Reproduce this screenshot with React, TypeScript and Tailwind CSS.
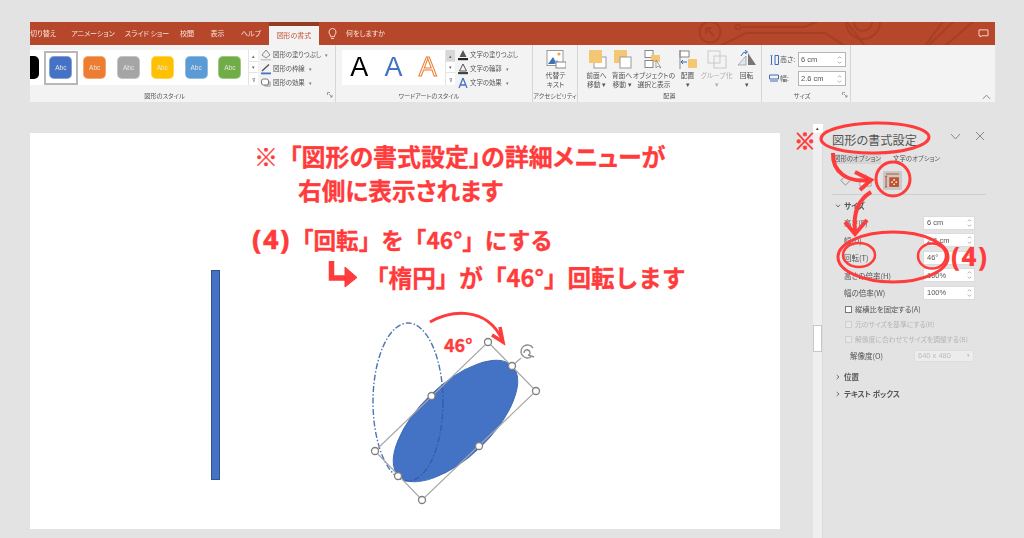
import React from "react";

const RED = "#ff3b3b";
const jp = "font-['Noto_Sans_CJK_JP',sans-serif]";

function Spinner() {
  return (
    <svg viewBox="0 0 6 11" className="w-[5px] h-[10px] shrink-0"><path d="M1 3.5 L3 1.5 L5 3.5 M1 7.5 L3 9.5 L5 7.5" fill="none" stroke="#8a8a8a" strokeWidth="0.8" /></svg>
  );
}

function Swatch({ c, selected }: { c: string; selected?: boolean }) {
  return (
    <div className={`h-[34px] flex items-center justify-center w-[33.8px] shrink-0 border-2 ${selected ? "border-[#b8b8b8]" : "border-transparent"}`}>
      <div className="h-[23px] w-[23px] shrink-0 rounded-[5px] border border-[#ffffff55] text-[#e6e6e6] text-[6.5px] font-['Liberation_Sans',sans-serif] flex items-center justify-center" style={{ background: c }}>Abc</div>
    </div>
  );
}

function ScrollBtns({ first }: { first?: boolean }) {
  return (
    <div className="w-[10px] h-[35px] flex flex-col border-l border-[#e4e4e4] bg-white text-[#666]">
      {["▴", "▾", "⊽"].map((g, i) => (
        <div key={i} className={`h-[11.67px] flex items-center justify-center text-[5px] leading-none ${first && i === 0 ? "bg-[#d8d8d8]" : ""} ${i < 2 ? "border-b border-[#e4e4e4]" : ""}`}>{g}</div>
      ))}
    </div>
  );
}

function CmdRow({ icon, label, arrow = true }: { icon: React.ReactNode; label: string; arrow?: boolean }) {
  return (
    <div className="h-[14px] flex items-center gap-[1px] text-[6.4px] text-[#555] whitespace-nowrap">
      <span className="w-[12px] h-[12px] shrink-0">{icon}</span>
      <span>{label}</span>
      {arrow && <span className="text-[5px] ml-[3px] text-[#777]">▾</span>}
    </div>
  );
}

const IconFill = () => (
  <svg viewBox="0 0 12 12" className="w-full h-full"><path d="M6 1 L10 6 L6 9 L2 6Z" fill="none" stroke="#8a8a8a" /><rect x="1" y="10" width="10" height="1.5" fill="#c9c9c9" /></svg>
);
const IconLine = () => (
  <svg viewBox="0 0 12 12" className="w-full h-full"><path d="M2 8 L9 1.5" stroke="#555" strokeWidth="1.4" /><rect x="1" y="9.5" width="10" height="1.8" fill="#4472c4" /></svg>
);
const IconEffect = () => (
  <svg viewBox="0 0 12 12" className="w-full h-full"><rect x="4" y="4" width="7" height="6" rx="2" fill="#bdbdbd" /><rect x="1.5" y="2" width="7" height="6" rx="2" fill="#fff" stroke="#777" /></svg>
);
const IconTextFill = () => (
  <svg viewBox="0 0 12 12" className="w-full h-full"><path d="M6 1 L9.5 8 H2.5Z" fill="#555" /><rect x="1" y="9" width="10" height="2.2" fill="#222" /></svg>
);
const IconTextLine = () => (
  <svg viewBox="0 0 12 12" className="w-full h-full"><path d="M6 1 L9.5 8 H2.5Z" fill="none" stroke="#555" /><rect x="1" y="9" width="10" height="2.2" fill="#444" /></svg>
);
const IconTextFx = () => (
  <svg viewBox="0 0 12 12" className="w-full h-full"><path d="M6 1 L10 11 M6 1 L2 11 M3.5 8 H8.5" fill="none" stroke="#4472c4" strokeWidth="1.3" /></svg>
);

function Launcher() {
  return (
    <svg viewBox="0 0 6 6" className="w-[6px] h-[6px]"><path d="M0.5 0.5 H3 M0.5 0.5 V3 M2 2 L5 5 M5 3 V5 H3" fill="none" stroke="#777" strokeWidth="0.7" /></svg>
  );
}

function Group({ w, label, launcher, children, pad = 0, labelPr = 0 }: { w: number; label: string; launcher?: boolean; children: React.ReactNode; pad?: number; labelPr?: number }) {
  return (
    <div className="h-full flex flex-col shrink-0 border-r border-[#d6d6d6]" style={{ width: w }}>
      <div className="flex-1 min-h-0" style={{ paddingLeft: pad }}>{children}</div>
      <div className="h-[13px] flex items-center justify-center relative text-[6.2px] text-[#555] whitespace-nowrap" style={{ paddingRight: labelPr }}>
        {label}
        {launcher && <span className="absolute right-[2px] top-[3px] flex"><Launcher /></span>}
      </div>
    </div>
  );
}

function BigBtn({ w, icon, lines, disabled }: { w: number; icon: React.ReactNode; lines: string[]; disabled?: boolean }) {
  return (
    <div className={`shrink-0 flex flex-col items-center pt-[5px] text-[6.8px] leading-[9px] ${disabled ? "text-[#b0b0b0]" : "text-[#555]"}`} style={{ width: w }}>
      <div className="h-[19px] w-[20px] mb-[2px]">{icon}</div>
      {lines.map((l, i) => (
        <div key={i} className="whitespace-nowrap">{l}</div>
      ))}
    </div>
  );
}

const Y = "#f4c775";

function SizeInput({ v }: { v: string }) {
  return (
    <div className="w-[48px] h-[15px] bg-white border border-[#b5b5b5] flex items-center justify-between pl-[2px] pr-[3px] text-[7.5px] text-[#555] font-['Liberation_Sans',sans-serif]">
      <span>{v}</span>
      <Spinner />
    </div>
  );
}

function Ribbon() {
  return (
    <div className={`ml-[30px] w-[965px] ${jp} blur-[0.35px]`}>
      <div className="h-[23px] bg-[#b7472a] flex items-center text-[7px] text-[#f6e3dc] relative overflow-hidden">
        <div className="w-[34px] text-left whitespace-nowrap">切り替え</div>
        <div className="w-[52px] text-center whitespace-nowrap pl-[6px]">アニメーション</div>
        <div className="w-[56px] text-center whitespace-nowrap pl-[6px]">スライド ショー</div>
        <div className="w-[30px] text-center">校閲</div>
        <div className="w-[31px] text-center">表示</div>
        <div className="w-[36px] text-center">ヘルプ</div>
        <div className="w-[50px] h-full bg-[#f3f3f3] border-t-[4px] border-[#963a22] text-[#c2553a] flex items-center justify-center whitespace-nowrap">図形の書式</div>
        <svg viewBox="0 0 12 14" className="w-[11px] h-[13px] ml-[8px]"><path d="M6 1.5a4 4 0 0 1 2.5 7L8 10.5H4L3.5 8.5A4 4 0 0 1 6 1.5Z M4.5 12.5h3" fill="none" stroke="#f6e3dc" /></svg>
        <div className="ml-[8px] whitespace-nowrap">何をしますか</div>
        <svg viewBox="0 0 965 23" className="absolute inset-0 w-[965px] h-[23px]" fill="none" stroke="#a53f25" strokeWidth="2">
          <circle cx="680" cy="10" r="10.5" />
          <path d="M676 6 L684 14 M676 6 H682 M676 6 V12" />
          <circle cx="708" cy="5" r="2.5" />
          <path d="M711 5 H775 L795 -4 M690 24 L716 11 H795 L815 24" />
          <path d="M815 -2 L835 24 H895 L914 -2 M898 24 L925 -2 M915 24 L945 -2" />
          <circle cx="833" cy="0" r="17" />
          <circle cx="833" cy="0" r="9" />
        </svg>
        <svg viewBox="0 0 12 10" className="absolute right-[6px] top-[7px] w-[11px] h-[9px]"><path d="M1 1 H11 V7.5 H4 L2.5 9 V7.5 H1Z" fill="none" stroke="#f6e3dc" /></svg>
      </div>
      <div className="h-[57px] bg-[#f3f3f3] flex">
        <Group w={306} label="図形のスタイル" launcher labelPr={36}>
          <div className="flex pt-[5px]">
            <div className="w-[218px] h-[35px] bg-white flex items-center overflow-hidden">
              <div className="h-[23px] w-[9px] bg-black rounded-r-[5px] shrink-0" />
              <div className="w-[5px] shrink-0" />
              <Swatch c="#4472c4" selected />
              <Swatch c="#ed7d31" />
              <Swatch c="#a5a5a5" />
              <Swatch c="#ffc000" />
              <Swatch c="#5b9bd5" />
              <Swatch c="#70ad47" />
            </div>
            <ScrollBtns />
            <div className="ml-[2px] -mt-[2px] flex flex-col">
              <CmdRow icon={<IconFill />} label="図形の塗りつぶし" />
              <CmdRow icon={<IconLine />} label="図形の枠線" />
              <CmdRow icon={<IconEffect />} label="図形の効果" />
            </div>
          </div>
        </Group>
        <Group w={197} label="ワードアートのスタイル" labelPr={10}>
          <div className="flex pt-[5px] pl-[6px]">
            <div className="w-[103px] h-[35px] bg-white flex items-center justify-around text-[27px] font-['Liberation_Sans',sans-serif] leading-none">
              <span className="text-black">A</span>
              <span className="text-[#4472c4]">A</span>
              <span className="text-white [-webkit-text-stroke:1px_#ed7d31]">A</span>
            </div>
            <ScrollBtns first />
            <div className="ml-[2px] -mt-[2px] flex flex-col">
              <CmdRow icon={<IconTextFill />} label="文字の塗りつぶし" arrow={false} />
              <CmdRow icon={<IconTextLine />} label="文字の輪郭" />
              <CmdRow icon={<IconTextFx />} label="文字の効果" />
            </div>
          </div>
        </Group>
        <Group w={45} label="アクセシビリティ">
          <BigBtn w={45} lines={["代替テ", "キスト"]} icon={
            <svg viewBox="0 0 20 19" className="w-full h-full"><rect x="1" y="0.5" width="16" height="15" fill="#fff" stroke="#999" /><path d="M2 14 L7 7 L11 14Z" fill="#3d72b8" /><path d="M8 14 L11 10 L15 14Z" fill="#7fa8d8" /><circle cx="13" cy="4" r="1.6" fill="#f0a53c" /><rect x="10" y="12" width="10" height="6" fill="#fff" stroke="#888" /></svg>
          } />
        </Group>
        <Group w={184} label="配置" pad={6}>
          <div className="flex">
            <BigBtn w={25} lines={["前面へ", "移動 ▾"]} icon={
              <svg viewBox="0 0 20 19" className="w-full h-full"><rect x="7" y="7" width="12" height="11" fill="#fff" stroke="#999" /><rect x="2" y="0" width="13" height="13" fill={Y} /></svg>
            } />
            <BigBtn w={26} lines={["背面へ", "移動 ▾"]} icon={
              <svg viewBox="0 0 20 19" className="w-full h-full"><rect x="2" y="0" width="13" height="13" fill={Y} /><rect x="8" y="7" width="11" height="11" fill="#fff" stroke="#999" /></svg>
            } />
            <BigBtn w={38} lines={["オブジェクトの", "選択と表示"]} icon={
              <svg viewBox="0 0 20 19" className="w-full h-full"><rect x="1" y="0.5" width="8" height="7" fill="#fff" stroke="#888" /><rect x="7" y="5" width="9" height="7" fill={Y} /><rect x="1" y="10.5" width="8" height="7" fill="#fff" stroke="#888" /><path d="M12 10 L12 18 L14 16 L17 18Z" fill="#fff" stroke="#777" strokeWidth="0.7" /></svg>
            } />
            <BigBtn w={29} lines={["配置", "▾"]} icon={
              <svg viewBox="0 0 20 19" className="w-full h-full"><rect x="2" y="1" width="9" height="6" fill="#fff" stroke="#888" /><rect x="10" y="9" width="9" height="9" fill={Y} /><path d="M2 0 V19" stroke="#888" /><path d="M9 12 H3 M5 10 L3 12 L5 14" stroke="#2f6bb5" fill="none" /></svg>
            } />
            <BigBtn w={29} disabled lines={["グループ化", "▾"]} icon={
              <svg viewBox="0 0 20 19" className="w-full h-full"><rect x="1" y="1" width="12" height="12" fill="none" stroke="#c9c9c9" /><rect x="7" y="6" width="12" height="12" fill="none" stroke="#c9c9c9" /></svg>
            } />
            <BigBtn w={31} lines={["回転", "▾"]} icon={
              <svg viewBox="0 0 20 19" className="w-full h-full"><path d="M1 15 L9 6 V15Z" fill="#dfe7f2" stroke="#888" strokeWidth="0.6" /><path d="M11 3 L19 15 H11Z" fill="#777" /><path d="M4 6 Q6 1 10 2 M8 0 L10.5 2 L8 4" stroke="#2f6bb5" fill="none" /></svg>
            } />
          </div>
        </Group>
        <Group w={89} label="サイズ" launcher labelPr={8}>
          <div className="pt-[7px] pl-[7px] flex flex-col gap-[4px]">
            {[["高さ:", "6 cm"], ["幅:", "2.6 cm"]].map(([l, v], i) => (
              <div key={l} className="flex items-center h-[15px] text-[7px] text-[#555]">
                <svg viewBox="0 0 10 10" className="w-[10px] h-[10px] shrink-0">
                  {i === 0 ? <path d="M1 0 H4 M1 10 H4 M2.5 1 V9 M6 0.5 H9.5 V9.5 H6Z" fill="none" stroke="#3f6db0" /> : <path d="M0 1 V4 M10 1 V4 M1 7 H9 M0.5 1 H9.5 V5 H0.5Z" fill="none" stroke="#3f6db0" />}
                </svg>
                <span className="w-[19px] pl-[1px] whitespace-nowrap">{l}</span>
                <SizeInput v={v} />
              </div>
            ))}
          </div>
        </Group>
        <div className="flex-1 flex items-end justify-end pr-[4px] pb-[2px]">
          <svg viewBox="0 0 10 6" className="w-[9px] h-[6px]"><path d="M1 5 L5 1 L9 5" fill="none" stroke="#777" /></svg>
        </div>
      </div>
    </div>
  );
}

function Slide() {
  const t = `absolute font-bold whitespace-nowrap text-[#ff3b3b] ${jp} leading-none [-webkit-text-stroke:0.3px_#ff3b3b]`;
  const num = "font-['Noto_Sans',sans-serif] font-extrabold";
  return (
    <div className="relative w-[750px] h-[396px] bg-white">
      <div className={`${t} left-[224px] top-[11px] text-[24px]`}>※<span className="ml-[6px]"> 「図形の書式設定」の詳細メニューが</span></div>
      <div className={`${t} left-[268px] top-[46px] text-[23.7px]`}>右側に表示されます</div>
      <div className={`${t} left-[222px] top-[92px] text-[22.6px] [font-feature-settings:normal]`}>
        <span className={`${num} text-[27px] tracking-[1.5px]`}>(4)</span><span>「回転」を「46°」にする</span>
      </div>
      <div className={`${t} left-[335px] top-[133px] text-[23.6px] [font-feature-settings:normal]`}>「楕円」が「46°」回転します</div>
      <div className={`${t} left-[414px] top-[202px] text-[18px]`}>46°</div>
      <div className="absolute left-[181px] top-[137px] w-[9px] h-[210px] bg-[#4472c4] border border-[#2f528f]" />
      <svg viewBox="0 0 750 396" className="absolute inset-0 w-[750px] h-[396px]" fill="none">
        <path d="M301.500 128 V145 H317" stroke={RED} strokeWidth="5.500" />
        <path d="M315 134 L327 144.500 L315 154Z" fill={RED} stroke={RED} />
        <ellipse cx="425.500" cy="288" rx="79" ry="36" transform="rotate(-44 425.500 288)" fill="#4472c4" stroke="#3f6ab5" />
        <ellipse cx="378" cy="269" rx="35" ry="79" stroke="#2f5aa6" strokeWidth="1.400" strokeDasharray="6 2 1.500 2" opacity="0.85" />
        <path d="M458 209 L506 258 L392 367 L345 318Z" stroke="#a6a6a6" strokeWidth="1.200" />
        <path d="M482 233 L491 225" stroke="#a6a6a6" strokeWidth="1.200" />
        {[[458, 209], [506, 258], [392, 367], [345, 318], [401.5, 263], [482, 233], [449, 313], [368, 343]].map(([x, y], i) => (
          <circle key={i} cx={x} cy={y} r="3.500" fill="#fff" stroke="#7f7f7f" strokeWidth="1.300" />
        ))}
        <path d="M501 224 A6.500 6.500 0 1 1 503 215 M494 220 A3 3 0 1 1 499 222 M498 222 L504 224" stroke="#8c8c8c" strokeWidth="1.400" />
        <path d="M400 189 C420 178 455 172 472 206" stroke={RED} strokeWidth="3" />
        <path d="M462 202 L473 209 L470 194" stroke={RED} strokeWidth="3.500" />
      </svg>
    </div>
  );
}

function PaneRow({ label, v }: { label: string; v: string }) {
  return (
    <div className="h-[17.5px] flex items-center justify-between pl-[21px] pr-[49px] text-[7.5px] text-[#555] whitespace-nowrap">
      <span>{label}</span>
      <div className="w-[52px] h-[14px] bg-white border border-[#dcdcdc] flex items-center justify-between pl-[3px] pr-[2px] text-[7.5px] font-['Liberation_Sans',sans-serif]">
        <span>{v}</span>
        <Spinner />
      </div>
    </div>
  );
}

function Check({ label, disabled }: { label: string; disabled?: boolean }) {
  return (
    <div className={`h-[15px] flex items-center gap-[3px] pl-[22px] whitespace-nowrap ${disabled ? "text-[#b5b5b5] text-[6.8px]" : "text-[#555] text-[7.3px]"}`}>
      <span className={`w-[7px] h-[7px] border ${disabled ? "border-[#cfcfcf] bg-[#e8e8e8]" : "border-[#777] bg-white"}`} />
      {label}
    </div>
  );
}

function Section({ label }: { label: string }) {
  return (
    <div className="h-[17px] flex items-center gap-[4px] pl-[13px] text-[7.5px] font-bold text-[#555] whitespace-nowrap">
      <svg viewBox="0 0 6 8" className="w-[4px] h-[6px]"><path d="M1 1 L4.500 4 L1 7" fill="none" stroke="#555" strokeWidth="1.200" /></svg>{label}
    </div>
  );
}

function Pane() {
  return (
    <div className={`w-[201px] shrink-0 ${jp} text-[#444]`}>
      <div className="pt-[6px] pl-[9px] pr-[37px] flex items-center justify-between h-[26px] text-[#555] text-[12.2px] whitespace-nowrap">
        <span>図形の書式設定</span>
      </div>
      <div className="blur-[0.3px]">
        <div className="mt-[3px] pl-[11px] flex gap-[12px] text-[6.4px] text-[#555] whitespace-nowrap h-[12px] items-center">
          <span className="bg-[#d4d4d4]">図形のオプション</span>
          <span>文字のオプション</span>
        </div>
        <div className="h-[25px] mt-[3px] pl-[16px] flex items-center gap-[7px]">
          <svg viewBox="0 0 14 14" className="w-[13px] h-[13px]"><path d="M2 7 L7 2 L12 7 L7 12Z" fill="none" stroke="#8a8a8a" /></svg>
          <svg viewBox="0 0 14 14" className="w-[13px] h-[13px]"><path d="M7 1 L13 6 V13 H1 V6Z" fill="#fff" stroke="#9a9a9a" /></svg>
          <div className="w-[19px] h-[19px] ml-[4px] bg-[#c9c9c9] flex items-center justify-center">
            <svg viewBox="0 0 14 14" className="w-[15px] h-[15px]"><path d="M1 1 H13 M1 3 V13 M0 13 H2 M0 3 H2" stroke="#c2512d" /><rect x="4" y="4" width="9" height="9" fill="#c2512d" /><circle cx="6.5" cy="8.5" r="0.8" fill="#fff" /><circle cx="10.5" cy="8.5" r="0.8" fill="#fff" /><circle cx="8.5" cy="6.5" r="0.8" fill="#fff" /><circle cx="8.5" cy="10.5" r="0.8" fill="#fff" /></svg>
          </div>
        </div>
        <div className="mx-[9px] w-[154px] border-t border-[#cfcfcf] mt-[1px]" />
        <div className="h-[17px] mt-[2px] flex items-center gap-[3px] pl-[12px] text-[7.5px] font-bold text-[#555]">
          <svg viewBox="0 0 8 6" className="w-[6px] h-[4px]"><path d="M1 1 L4 4.500 L7 1" fill="none" stroke="#555" strokeWidth="1.200" /></svg>サイズ
        </div>
        <PaneRow label="高さ(E)" v="6 cm" />
        <PaneRow label="幅(D)" v="2.6 cm" />
        <PaneRow label="回転(T)" v="46°" />
        <PaneRow label="高さの倍率(H)" v="100%" />
        <PaneRow label="幅の倍率(W)" v="100%" />
        <Check label="縦横比を固定する(A)" />
        <Check label="元のサイズを基準にする(R)" disabled />
        <Check label="解像度に合わせてサイズを調整する(B)" disabled />
        <div className="h-[19px] flex items-center justify-between pl-[27px] pr-[50px] text-[7.5px] text-[#555]">
          <span>解像度(O)</span>
          <div className="w-[60px] h-[12px] bg-[#ececec] border border-[#dedede] text-[#bbb] text-[7.5px] flex items-center justify-between px-[3px] font-['Liberation_Sans',sans-serif]">
            <span>640 x 480</span><span className="text-[5px]">▾</span>
          </div>
        </div>
        <div className="mt-[3px]"><Section label="位置" /><Section label="テキスト ボックス" /></div>
      </div>
    </div>
  );
}

export default function App() {
  return (
    <div className="relative w-[1024px] h-[538px] overflow-hidden bg-[#e3e3e3] [font-feature-settings:'palt']">
      <div className="h-[22px]" />
      <Ribbon />
      <div className="flex pl-[30px]">
        <div className="pt-[31px]"><Slide /></div>
        <div className="ml-[33px] mt-[22px] w-[10px] h-[414px] bg-[#efefef] border-r border-[#dcdcdc] flex flex-col items-center">
          <div className="w-[10px] h-[9px] bg-white flex items-center justify-center text-[5px] leading-none text-[#333]">▴</div>
          <div className="mt-[192px] w-[9px] h-[27px] bg-white border border-[#c8c8c8]" />
        </div>
        <div className="mt-[22px]"><Pane /></div>
      </div>

      {/* Annotations over the task pane */}
      <svg viewBox="0 0 1024 538" className="absolute inset-0 w-[1024px] h-[538px]" fill="none">
        <path d="M951 134 L955.500 139 L960 134 M976 132 L984 140 M984 132 L976 140" stroke="#888" strokeWidth="1" />
        <ellipse cx="875" cy="138" rx="54" ry="15" stroke={RED} strokeWidth="3" transform="rotate(-1 875 138)" />
        <path d="M833 153 C832 172 848 183 869 180" stroke={RED} strokeWidth="4" />
        <path d="M855 172 L871 180 L860 190" stroke={RED} strokeWidth="4" />
        <circle cx="893" cy="179" r="17" stroke={RED} strokeWidth="3" />
        <path d="M871 192 C858 200 853 213 855 231" stroke={RED} strokeWidth="4" />
        <path d="M845 222 L855 234 L867 220" stroke={RED} strokeWidth="4" />
        <ellipse cx="893" cy="257" rx="55" ry="25" stroke={RED} strokeWidth="3" />
        <ellipse cx="859" cy="255" rx="16" ry="12" stroke={RED} strokeWidth="2.500" />
        <ellipse cx="932" cy="256" rx="14" ry="12.500" stroke={RED} strokeWidth="2.500" />
      </svg>
      <div className={`absolute left-[794px] top-[128px] text-[22px] font-bold leading-none text-[#ff3b3b] [-webkit-text-stroke:0.8px_#ff3b3b] ${jp}`}>※</div>
      <div className="absolute left-[951px] top-[243px] text-[26px] tracking-[1.5px] font-extrabold leading-none text-[#ff3b3b] font-['Noto_Sans',sans-serif] whitespace-nowrap">(4)</div>
    </div>
  );
}
